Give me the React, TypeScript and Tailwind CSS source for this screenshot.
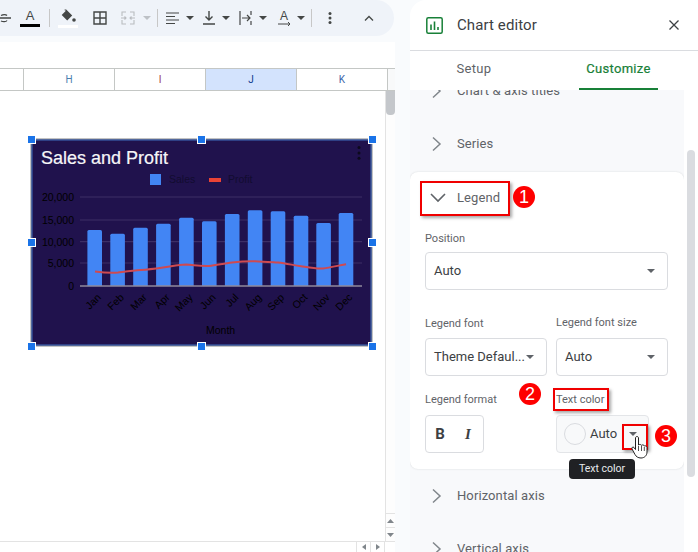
import React from "react";

const months = ["Jan","Feb","Mar","Apr","May","Jun","Jul","Aug","Sep","Oct","Nov","Dec"];
const xs = [94.7,117.6,140.5,163.4,186.4,209.3,232.2,255.1,278,301,323.6,346];
const tops = [230,233.7,227.7,223.7,217.7,221.3,214,210.3,211.3,215.7,223,213];
const profit = "M95 271.5C103 272.5 110 273 118 272.5C126 271.5 133 270.5 141 270C149 269.5 156 268.5 163 267.5C171 266.5 178 264.5 186 264.5C194 265 201 266.5 209 266C217 265 224 263.5 232 262.5C240 261.5 247 261 255 261.2C263 261.5 270 262 278 262.5C286 263.5 293 265 301 266.2C309 267.5 316 269 323 268.5C331 267.5 338 265.5 346 264.2";

function Caret({ color = "#444746" }: { color?: string }) {
  return (
    <svg width="8" height="4" viewBox="0 0 8 4" className="shrink-0">
      <path d="M0 0h8L4 4z" fill={color} />
    </svg>
  );
}

function Tool({ w, children }: { w: number; children: React.ReactNode }) {
  return <div className="flex h-full shrink-0 items-center justify-center" style={{ width: w }}>{children}</div>;
}

function Divider() {
  return <div className="h-[18px] w-px shrink-0 bg-[#c7c7c7]" />;
}

function Toolbar() {
  return (
    <div className="relative flex h-[36px] w-[394px] items-center overflow-hidden rounded-r-[18px] bg-[#eff3f9]">
      <Tool w={11}>
        <svg width="11" height="16" viewBox="0 0 11 16"><path d="M-4 8H11M7 5.500C6 4.500 3 4.500 1 5.500M7 10.500C6 12 3 12 1 11" stroke="#444746" strokeWidth="1.300" fill="none" /></svg>
      </Tool>
      <Tool w={38}>
        <div className="flex w-[20px] flex-col items-center">
          <span className="text-[13px] leading-[14px] text-[#444746] [font-family:'Liberation_Sans',sans-serif]">A</span>
          <div className="mt-[1px] h-[3px] w-[20px] bg-black" />
        </div>
      </Tool>
      <Divider />
      <Tool w={36}>
        <div className="flex w-[20px] flex-col items-center">
          <svg width="18" height="15" viewBox="0 0 18 15"><path d="M6 0.500l1.200 0 6 6-5 5-5.500-5.500 4.200-4.200L5.200 1z" fill="#444746" /><circle cx="15" cy="11" r="1.800" fill="#444746" /></svg>
          <div className="mt-[1px] h-[3px] w-[20px] bg-white" />
        </div>
      </Tool>
      <Tool w={27}>
        <svg width="14" height="14" viewBox="0 0 14 14"><path d="M1 1h12v12H1zM7 1v12M1 7h12" stroke="#444746" strokeWidth="1.400" fill="none" /></svg>
      </Tool>
      <Tool w={30}>
        <svg width="14" height="14" viewBox="0 0 14 14"><path d="M1 5V1h4M13 5V1H9M1 9v4h4M13 9v4H9M0 7h5M3.500 5.500L5 7 3.500 8.500M14 7H9M10.500 5.500L9 7l1.500 1.500" stroke="#b9bcc0" strokeWidth="1.100" fill="none" /></svg>
      </Tool>
      <Tool w={8}><Caret color="#bdc1c6" /></Tool>
      <Tool w={12}><Divider /></Tool>
      <Tool w={20}>
        <svg width="14" height="13" viewBox="0 0 14 13"><path d="M0 1h13M0 4.500h9M0 8h13M0 11.500h9" stroke="#444746" strokeWidth="1.200" fill="none" /></svg>
      </Tool>
      <Tool w={14}><Caret /></Tool>
      <Tool w={24}>
        <svg width="12" height="14" viewBox="0 0 12 14"><path d="M6 0v9M2.500 5.500L6 9l3.500-3.500M0 13h12" stroke="#444746" strokeWidth="1.400" fill="none" /></svg>
      </Tool>
      <Tool w={10}><Caret /></Tool>
      <Tool w={28}>
        <svg width="13" height="14" viewBox="0 0 13 14"><path d="M1 0v14M12 0v4M12 10v4M3 7h8M8 4l3 3-3 3" stroke="#444746" strokeWidth="1.200" fill="none" /></svg>
      </Tool>
      <Tool w={8}><Caret /></Tool>
      <Tool w={34}>
        <div className="flex flex-col items-center">
          <span className="text-[12px] leading-[12px] text-[#444746] [font-family:'Liberation_Sans',sans-serif]">A</span>
          <svg width="13" height="4" viewBox="0 0 13 4"><path d="M0 2h12M10 0l2 2-2 2" stroke="#444746" strokeWidth="1" fill="none" /></svg>
        </div>
      </Tool>
      <Tool w={0}><Caret /></Tool>
      <Tool w={20}><Divider /></Tool>
      <Tool w={18}>
        <svg width="4" height="12" viewBox="0 0 4 12" fill="#444746"><circle cx="2" cy="1.500" r="1.500" /><circle cx="2" cy="6" r="1.500" /><circle cx="2" cy="10.500" r="1.500" /></svg>
      </Tool>
      <Tool w={60}>
        <svg width="10" height="6" viewBox="0 0 10 6"><path d="M1 5.500l4-4 4 4" stroke="#444746" strokeWidth="1.300" fill="none" /></svg>
      </Tool>
    </div>
  );
}

function ColHead({ label, w, color, active }: { label: string; w: number; color: string; active?: boolean }) {
  return (
    <div
      className={`flex h-full shrink-0 items-center justify-center border-r border-[#c4c7c5] text-[10px] ${active ? "bg-[#d3e3fd]" : "bg-white"}`}
      style={{ width: w, color }}
    >
      {label}
    </div>
  );
}

function Chart() {
  return (
    <svg width="343" height="209" viewBox="30 138 343 209" className="block [font-family:'Liberation_Sans',sans-serif]">
      <rect x="31" y="139" width="341" height="207" fill="#20124d" stroke="#9c9c9c" strokeWidth="1.200" />
      <rect x="32" y="140" width="339" height="205" fill="#20124d" stroke="#3f6fc0" strokeWidth="1" />
      <text x="41" y="164" fontSize="18" fill="#f6f6f8" stroke="#f6f6f8" strokeWidth="0.200">Sales and Profit</text>
      <circle cx="359" cy="147.500" r="1.500" fill="#0c0a1c" />
      <circle cx="359" cy="153" r="1.500" fill="#0c0a1c" />
      <circle cx="359" cy="158.300" r="1.500" fill="#0c0a1c" />
      <rect x="150" y="174" width="11" height="11" fill="#4285f4" />
      <text x="169" y="183" fontSize="10.500" fill="#120c30">Sales</text>
      <rect x="209" y="178" width="12" height="4" fill="#ea4335" />
      <text x="228" y="183" fontSize="10.500" fill="#120c30">Profit</text>
      {[197, 220, 241.7, 263].map((y) => (
        <line key={y} x1="80" x2="362" y1={y} y2={y} stroke="#3d2f66" strokeWidth="1.200" />
      ))}
      {[["20,000",201],["15,000",223.500],["10,000",245.500],["5,000",267],["0",289.500]].map(([t, y]) => (
        <text key={t as string} x="74" y={y as number} textAnchor="end" fontSize="10.500" fill="#000">{t}</text>
      ))}
      {xs.map((x, i) => (
        <path key={i} d={`M${x - 7.300} 286V${tops[i] + 1.500}Q${x - 7.300} ${tops[i]} ${x - 5.800} ${tops[i]}H${x + 5.800}Q${x + 7.300} ${tops[i]} ${x + 7.300} ${tops[i] + 1.500}V286Z`} fill="#4285f4" />
      ))}
      <line x1="80" x2="362" y1="286" y2="286" stroke="#8f8a9c" strokeWidth="1.300" />
      <path d={profit} stroke="#cf4a50" strokeWidth="2" fill="none" />
      {months.map((m, i) => (
        <text key={m} x={xs[i] + 7} y="298" textAnchor="end" fontSize="10.500" fill="#000" transform={`rotate(-45 ${xs[i] + 7} 298)`}>{m}</text>
      ))}
      <text x="206" y="334" fontSize="10.500" fill="#000">Month</text>
    </svg>
  );
}

function Handle({ x, y }: { x: number; y: number }) {
  return <div className="absolute h-[9px] w-[9px] border border-white bg-[#1a73e8]" style={{ left: x - 4.5, top: y - 4.5 }} />;
}

function Sheet() {
  const handles = [[31,139],[201,139],[372,139],[31,242],[372,242],[31,346],[201,346],[372,346]];
  return (
    <div className="relative flex h-[552px] w-[410px] shrink-0 flex-col bg-[#f9fbfd] [font-family:Roboto,sans-serif]">
      <Toolbar />
      <div className="ml-0 mt-[6px] flex w-[395px] flex-1 flex-col bg-white">
        <div className="h-[26px] shrink-0" />
        <div className="flex h-[23px] shrink-0 border-y border-[#c4c7c5]">
          <div className="h-full w-[24px] shrink-0 border-r border-[#c4c7c5]" />
          <ColHead label="H" w={91} color="#4a7fb0" />
          <ColHead label="I" w={91} color="#9c3d55" />
          <ColHead label="J" w={91} color="#0b3a8c" active />
          <ColHead label="K" w={91} color="#3a63a8" />
          <div className="flex-1 bg-[#f8f9fa]" />
        </div>
        <div className="flex min-h-0 flex-1 flex-col">
          <div className="flex min-h-0 flex-1">
            <div className="flex-1" />
            <div className="flex w-[10px] flex-col border-l border-[#e3e3e3] bg-[#fdfdfd]">
              <div className="h-[24px] rounded-b-[4px] bg-[#c4c7cb]" />
              <div className="flex-1" />
              <div className="flex h-[14px] items-center justify-center border-t border-[#e3e3e3]"><Tri up /></div>
              <div className="flex h-[14px] items-center justify-center border-t border-[#e3e3e3]"><Tri /></div>
            </div>
          </div>
          <div className="flex h-[11px] shrink-0 border-t border-[#e3e3e3]">
            <div className="flex-1" />
            <div className="flex w-[14px] items-center justify-center border-l border-[#e3e3e3]"><span className="h-0 w-0 border-y-[3px] border-r-[4px] border-y-transparent border-r-[#80868b]" /></div>
            <div className="flex w-[14px] items-center justify-center border-l border-[#e3e3e3]"><span className="h-0 w-0 border-y-[3px] border-l-[4px] border-y-transparent border-l-[#80868b]" /></div>
            <div className="w-[11px] border-l border-[#e3e3e3]" />
          </div>
        </div>
      </div>
      <div className="absolute left-[30px] top-[138px]"><Chart /></div>
      {handles.map(([x, y]) => <Handle key={`${x}-${y}`} x={x} y={y} />)}
    </div>
  );
}

function Tri({ up }: { up?: boolean }) {
  return (
    <svg width="7" height="4" viewBox="0 0 7 4"><path d={up ? "M0 4h7L3.500 0z" : "M0 0h7L3.500 4z"} fill="#80868b" /></svg>
  );
}

function Chev() {
  return (
    <svg width="11" height="16" viewBox="0 0 11 16" className="shrink-0"><path d="M2 1.500l7 6.500-7 6.500" stroke="#80868b" strokeWidth="1.500" fill="none" /></svg>
  );
}

function Row({ label }: { label: string }) {
  return (
    <div className="flex h-[53px] shrink-0 items-center pl-[21px]">
      <Chev />
      <span className="ml-[15px] text-[13px] tracking-[0.1px] text-[#5f6368]">{label}</span>
    </div>
  );
}

function Label({ children }: { children: React.ReactNode }) {
  return <div className="h-[14px] text-[11px] leading-[14px] text-[#5f6368]">{children}</div>;
}

function Select({ value, w }: { value: string; w: number }) {
  return (
    <div className="flex h-[38px] items-center justify-between rounded-[4px] border border-[#dadce0] bg-white pl-[8px] pr-[12px]" style={{ width: w }}>
      <span className="-mt-[1px] text-[13px] text-[#3c4043]">{value}</span>
      <Caret color="#5f6368" />
    </div>
  );
}

function Badge({ n, x, y }: { n: number; x: number; y: number }) {
  return (
    <div
      className="absolute flex h-[22px] w-[22px] items-center justify-center rounded-full bg-[#fe0000] text-[18px] leading-none text-white [font-family:'Liberation_Sans',sans-serif]"
      style={{ left: x - 11, top: y - 11 }}
    >
      {n}
    </div>
  );
}

function RedBox({ x, y, w, h }: { x: number; y: number; w: number; h: number }) {
  return (
    <div
      className="absolute border-[2px] border-[#f00000] shadow-[2px_2px_3px_rgba(0,0,0,0.35)]"
      style={{ left: x, top: y, width: w, height: h }}
    />
  );
}

function Panel() {
  return (
    <div className="relative flex h-[552px] w-[288px] shrink-0 flex-col overflow-hidden rounded-tl-[16px] bg-white [font-family:Roboto,sans-serif]">
      <div className="flex h-[51px] shrink-0 items-center border-b border-[#dadce0] pl-[16px] pr-[19px]">
        <svg width="17" height="17" viewBox="0 0 17 17" className="shrink-0">
          <rect x="0.800" y="0.800" width="15.400" height="15.400" rx="1.500" stroke="#188038" strokeWidth="1.500" fill="none" />
          <path d="M5 7.500v5.500M8.500 4.500v8.500M12 10v3" stroke="#188038" strokeWidth="1.600" />
        </svg>
        <span className="ml-[14px] flex-1 text-[15px] tracking-[0.1px] text-[#3c4043]">Chart editor</span>
        <svg width="10" height="10" viewBox="0 0 10 10"><path d="M0.500 0.500l9 9M9.500 0.500l-9 9" stroke="#3c4043" strokeWidth="1.300" /></svg>
      </div>
      <div className="flex h-[39px] shrink-0 items-end pl-[46px]">
        <div className="flex h-[37px] w-[36px] items-center justify-center whitespace-nowrap pb-[6px] text-[13px] tracking-[0.3px] text-[#5f6368]">Setup</div>
        <div className="ml-[87px] flex h-[37px] w-[79px] items-center justify-center whitespace-nowrap border-b-[2px] border-[#188038] pb-[4px] text-[13px] tracking-[0.3px] text-[#188038] [-webkit-text-stroke:0.2px_#188038]">Customize</div>
      </div>
      <div className="flex min-h-0 flex-1">
        <div className="flex w-[274px] shrink-0 flex-col overflow-hidden bg-[#f8f9fb]">
          <div className="-mt-[26px]">
            <Row label="Chart & axis titles" />
            <Row label="Series" />
          </div>
          <div className="mt-[2px] flex h-[297px] shrink-0 flex-col rounded-[8px] bg-white pl-[15px] shadow-[0_0_2px_rgba(60,64,67,0.18)]">
            <div className="flex h-[51px] shrink-0 items-center pl-[5px]">
              <svg width="16" height="10" viewBox="0 0 16 10"><path d="M1 1l7 7 7-7" stroke="#5f6368" strokeWidth="1.600" fill="none" /></svg>
              <span className="ml-[11px] text-[13px] tracking-[0.1px] text-[#5f6368]">Legend</span>
            </div>
            <div className="mt-[9px]"><Label>Position</Label></div>
            <div className="mt-[6px]"><Select value="Auto" w={243} /></div>
            <div className="mt-[27px] flex gap-[9px]">
              <div><Label>Legend font</Label><div className="mt-[7px]"><Select value="Theme Defaul..." w={122} /></div></div>
              <div className="-mt-[1px]"><Label>Legend font size</Label><div className="mt-[8px]"><Select value="Auto" w={112} /></div></div>
            </div>
            <div className="mt-[17px] flex gap-[9px]">
              <div className="w-[122px]">
                <Label>Legend format</Label>
                <div className="mt-[8px] flex h-[38px] w-[59px] items-center rounded-[4px] border border-[#dadce0] bg-white text-[#3c4043]">
                  <span className="w-[28px] text-center text-[15px] font-bold">B</span>
                  <span className="w-[28px] text-center text-[15px] font-bold italic [font-family:'Liberation_Serif',serif]">I</span>
                </div>
              </div>
              <div>
                <Label>Text color</Label>
                <div className="mt-[8px] flex h-[38px] w-[93px] items-center rounded-[4px] border border-[#e3e5e8] bg-[#f8f9fa] pl-[7px]">
                  <span className="h-[22px] w-[22px] rounded-full border border-[#dadce0] bg-[#f8f9fa]" />
                  <span className="-mt-[1px] ml-[4px] text-[13px] text-[#3c4043]">Auto</span>
                  <span className="ml-[12px]"><Caret color="#5f6368" /></span>
                </div>
              </div>
            </div>
          </div>
          <Row label="Horizontal axis" />
          <Row label="Vertical axis" />
        </div>
        <div className="flex-1 pl-[3px] pt-[60px]">
          <div className="h-[327px] w-[8px] rounded-[4px] bg-[#dadce0]" />
        </div>
      </div>
      <div className="absolute left-[159px] top-[459px] flex h-[20px] w-[66px] items-center justify-center rounded-[4px] bg-[#202124] text-[10.500px] text-[#e8eaed]">Text color</div>
      <RedBox x={10} y={181} w={90} h={35} />
      <RedBox x={143} y={388} w={56} h={23} />
      <RedBox x={212} y={424} w={26} h={26} />
      <Badge n={1} x={114} y={197} />
      <Badge n={2} x={120} y={394} />
      <Badge n={3} x={256} y={436} />
      <svg width="18" height="24" viewBox="0 0 18 24" className="absolute left-[221px] top-[435px]">
        <path d="M4.500 3c0-2 3-2 3 0v7c1-1 2.500-.5 3 .3 1-.8 2.500-.3 2.800.7 1-.5 2.500 0 2.700 1.500V17c0 3.500-2.500 6-6 6-3 0-5-1.500-6-3.500L1 14c-.8-1.500 1-2.500 2-1.500l1.500 2z" fill="#fff" stroke="#222" strokeWidth="1" />
        <path d="M7.500 11v5M10.500 11v5M13.300 12v4" stroke="#222" strokeWidth="0.800" />
      </svg>
    </div>
  );
}

export default function App() {
  return (
    <div className="flex h-[552px] w-[698px] overflow-hidden bg-[#f9fbfd]">
      <Sheet />
      <Panel />
    </div>
  );
}
